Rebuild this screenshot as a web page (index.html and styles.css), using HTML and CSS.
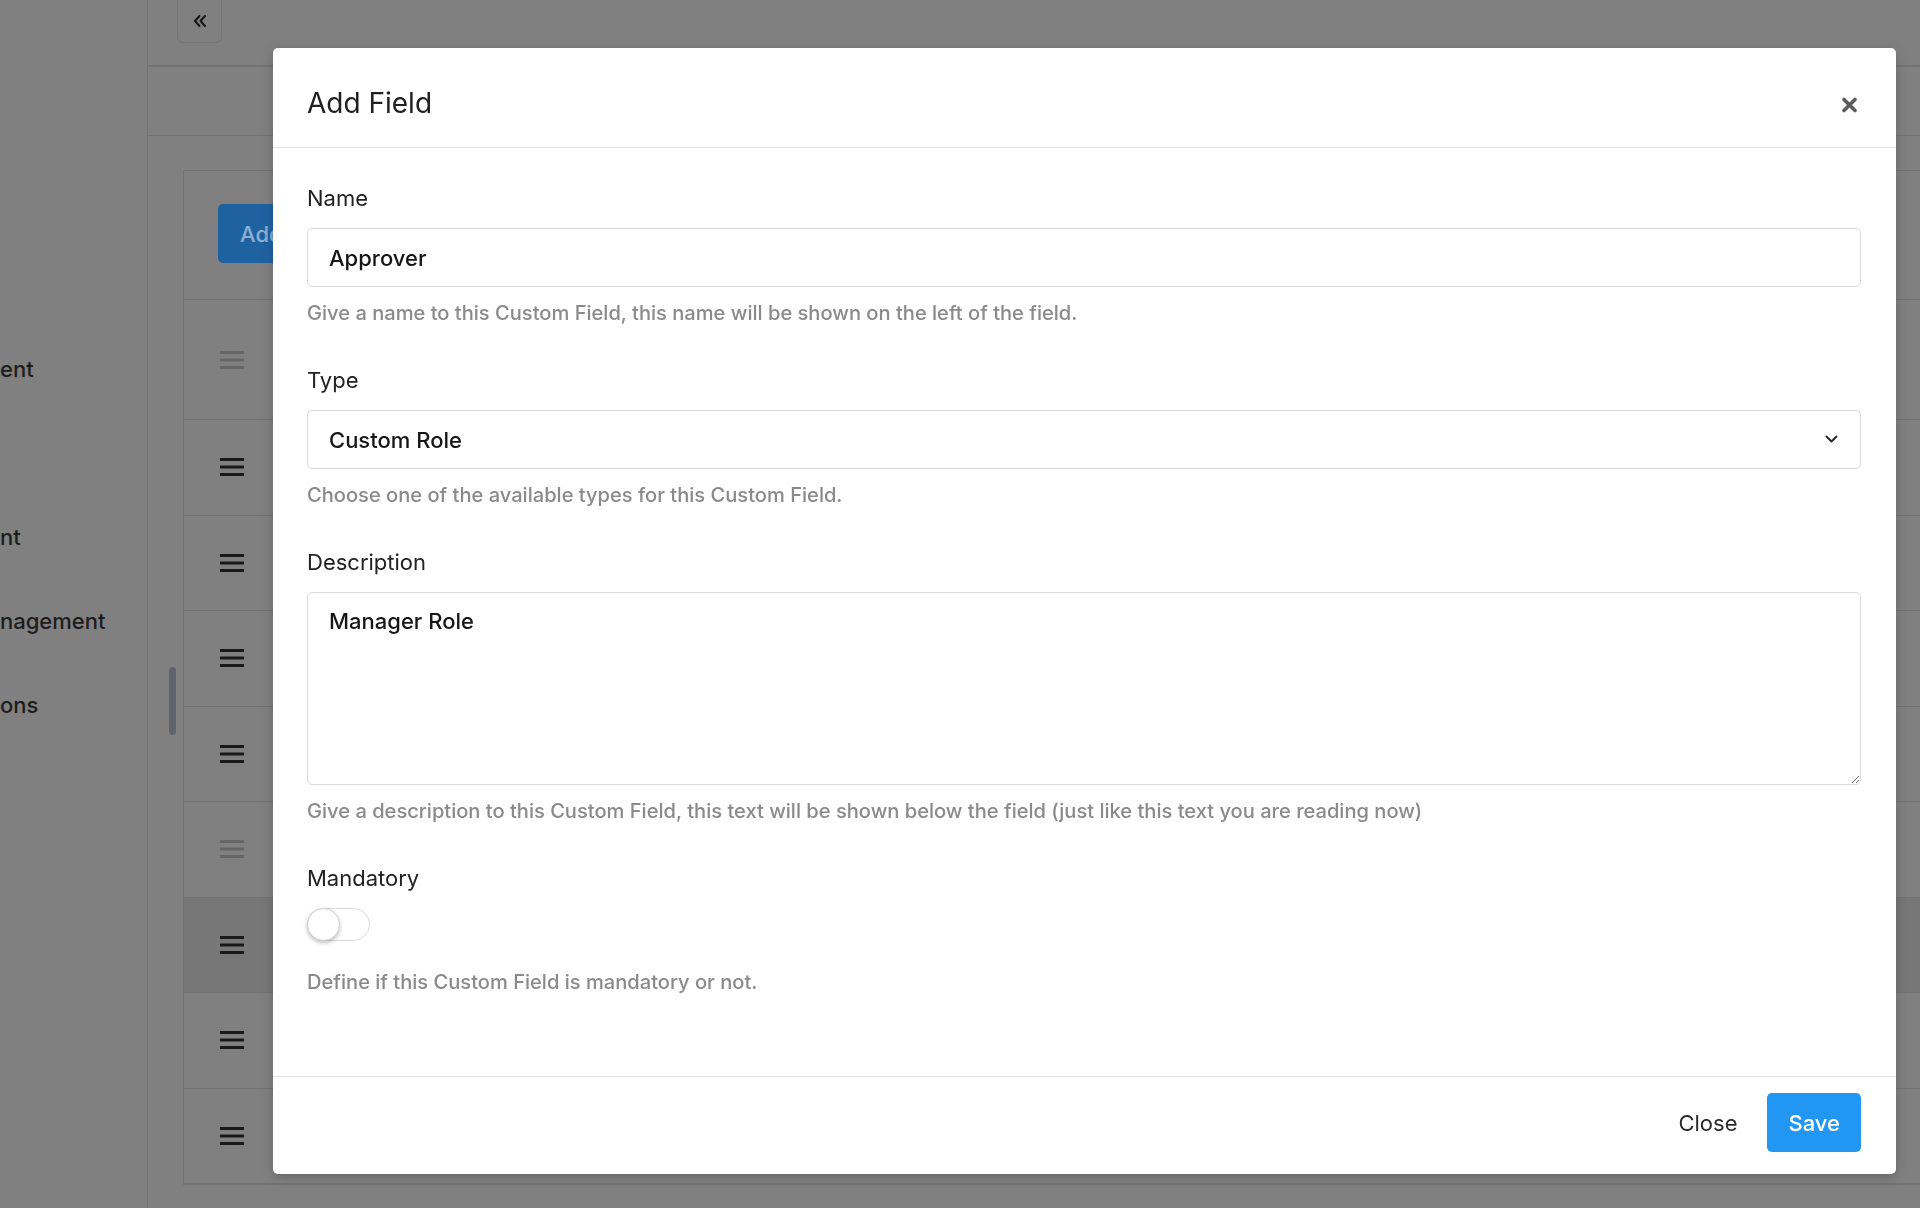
FILE: index.html
```html
<!DOCTYPE html>
<html lang="en">

<head>
    <meta charset="UTF-8">
    <meta name="viewport" content="width=device-width, initial-scale=1.0">
    <title>Custom Fields</title>
    <link rel="stylesheet" href="styles.css">
</head>

<body>
    <aside class="sidebar">
        <ul class="nav">
            <li>ent</li>
            <li></li>
            <li>nt</li>
            <li>nagement</li>
            <li>ons</li>
        </ul>
    </aside>

    <div class="main">
        <div class="scroll-thumb"></div>
        <div class="topbar">
            <button class="collapse">
                <svg width="14" height="12" viewBox="0 0 14 12" fill="none" stroke="currentColor" stroke-width="2" stroke-linecap="round" stroke-linejoin="round">
                    <path d="M6.5 1 L2 6 L6.5 11" />
                    <path d="M12 1 L7.5 6 L12 11" />
                </svg>
            </button>
        </div>
        <div class="subbar"></div>

        <div class="content">
            <div class="card">
                <div class="card-head">
                    <button class="btn-add">Add Field</button>
                </div>
                <div class="row tall faded"><svg class="handle" viewBox="0 0 24 18"><rect y="0" width="24" height="3" /><rect y="7.5" width="24" height="3" /><rect y="15" width="24" height="3" /></svg></div>
                <div class="row"><svg class="handle" viewBox="0 0 24 18"><rect y="0" width="24" height="3" /><rect y="7.5" width="24" height="3" /><rect y="15" width="24" height="3" /></svg></div>
                <div class="row"><svg class="handle" viewBox="0 0 24 18"><rect y="0" width="24" height="3" /><rect y="7.5" width="24" height="3" /><rect y="15" width="24" height="3" /></svg></div>
                <div class="row"><svg class="handle" viewBox="0 0 24 18"><rect y="0" width="24" height="3" /><rect y="7.5" width="24" height="3" /><rect y="15" width="24" height="3" /></svg></div>
                <div class="row"><svg class="handle" viewBox="0 0 24 18"><rect y="0" width="24" height="3" /><rect y="7.5" width="24" height="3" /><rect y="15" width="24" height="3" /></svg></div>
                <div class="row faded"><svg class="handle" viewBox="0 0 24 18"><rect y="0" width="24" height="3" /><rect y="7.5" width="24" height="3" /><rect y="15" width="24" height="3" /></svg></div>
                <div class="row active"><svg class="handle" viewBox="0 0 24 18"><rect y="0" width="24" height="3" /><rect y="7.5" width="24" height="3" /><rect y="15" width="24" height="3" /></svg></div>
                <div class="row"><svg class="handle" viewBox="0 0 24 18"><rect y="0" width="24" height="3" /><rect y="7.5" width="24" height="3" /><rect y="15" width="24" height="3" /></svg></div>
                <div class="row"><svg class="handle" viewBox="0 0 24 18"><rect y="0" width="24" height="3" /><rect y="7.5" width="24" height="3" /><rect y="15" width="24" height="3" /></svg></div>
            </div>
        </div>
    </div>

    <div class="modal">
        <div class="modal-header">
            <h2 class="modal-title">Add Field</h2>
            <button class="modal-close">
                <svg width="17" height="16" viewBox="0 0 17 16" fill="none" stroke="currentColor" stroke-width="3.6" stroke-linecap="round">
                    <path d="M3 2.5 L14 13.5" />
                    <path d="M14 2.5 L3 13.5" />
                </svg>
            </button>
        </div>

        <div class="modal-body">
            <div class="form-group">
                <label class="form-label">Name</label>
                <input class="form-control" type="text" value="Approver">
                <p class="help">Give a name to this Custom Field, this name will be shown on the left of the field.</p>
            </div>

            <div class="form-group">
                <label class="form-label">Type</label>
                <div class="select-wrap">
                    <select class="form-control">
                        <option>Custom Role</option>
                        <option>Text</option>
                        <option>Number</option>
                        <option>Date</option>
                    </select>
                    <svg class="chevron" width="13" height="8" viewBox="0 0 13 8" fill="none" stroke="currentColor" stroke-width="2" stroke-linecap="round" stroke-linejoin="round">
                        <path d="M1.5 1.5 L6.5 6.5 L11.5 1.5" />
                    </svg>
                </div>
                <p class="help">Choose one of the available types for this Custom Field.</p>
            </div>

            <div class="form-group">
                <label class="form-label">Description</label>
                <textarea class="form-control">Manager Role</textarea>
                <p class="help">Give a description to this Custom Field, this text will be shown below the field (just like this text you are reading now)</p>
            </div>

            <div class="form-group">
                <label class="form-label">Mandatory</label>
                <label class="switch">
                    <input type="checkbox">
                    <span class="knob"></span>
                </label>
                <p class="help">Define if this Custom Field is mandatory or not.</p>
            </div>
        </div>

        <div class="modal-footer">
            <button class="btn-link">Close</button>
            <button class="btn-primary">Save</button>
        </div>
    </div>
</body>

</html>
```

FILE: styles.css
```css
* {
    margin: 0;
    padding: 0;
    box-sizing: border-box;
}

body {
    height: 1208px;
    overflow: hidden;
    display: flex;
    background-color: #808080;
    font-family: Inter, "Noto Sans", sans-serif;
    color: #1c1c1c;
}

button,
input,
select,
textarea {
    font-family: Inter, "Noto Sans", sans-serif;
}

/* page behind the dialog (already dimmed) */

.sidebar {
    width: 148px;
    flex-shrink: 0;
    border-right: 1px solid #747474;
}

.nav {
    list-style: none;
    padding-top: 327px;
}

.nav li {
    height: 84px;
    line-height: 84px;
    font-size: 22px;
    font-weight: 500;
    color: #1d1d1d;
    white-space: nowrap;
}

.main {
    flex: 1;
    min-width: 0;
    position: relative;
    display: flex;
    flex-direction: column;
}

.scroll-thumb {
    position: absolute;
    left: 21px;
    top: 667px;
    width: 7px;
    height: 68px;
    border-radius: 4px;
    background-color: #5f636c;
}

.topbar {
    height: 67px;
    border-bottom: 2px solid #727272;
    padding-left: 29px;
}

.collapse {
    width: 45px;
    height: 43px;
    display: flex;
    align-items: center;
    justify-content: center;
    border: 1px solid #767676;
    border-top: none;
    border-radius: 0 0 6px 6px;
    background-color: #808080;
    color: #151515;
}

.subbar {
    height: 69px;
    border-bottom: 1px solid #727272;
}

.content {
    padding: 34px 0 0 35px;
}

.card {
    border: 1px solid #737373;
    border-right: none;
}

.card-head {
    height: 129px;
    padding: 33px 0 0 34px;
    border-bottom: 1px solid #727272;
}

.btn-add {
    height: 59px;
    width: 150px;
    padding-left: 22px;
    text-align: left;
    border: none;
    border-radius: 5px;
    background-color: #1f62a2;
    color: #8cafd2;
    font-size: 22px;
    font-weight: 500;
}

.row {
    height: 95.5px;
    display: flex;
    align-items: center;
    padding-left: 36px;
    border-bottom: 1px solid #727272;
    color: #1a1a1a;
}

.row.tall {
    height: 120px;
}

.row.faded {
    color: #666;
}

.row.active {
    background-color: #777;
}

.handle {
    width: 24px;
    height: 18px;
    fill: currentColor;
}

/* dialog */

.modal {
    position: fixed;
    left: 273px;
    top: 48px;
    width: 1623px;
    background-color: #fff;
    border-radius: 5px;
    box-shadow: 0 3px 12px rgba(0, 0, 0, 0.2);
}

.modal-header {
    display: flex;
    justify-content: space-between;
    align-items: center;
    padding: 36px 34px 25px;
    border-bottom: 1px solid #e4e4e4;
}

.modal-title {
    font-size: 28px;
    font-weight: 400;
    line-height: 38px;
    color: #212121;
}

.modal-close {
    border: none;
    background: none;
    color: #5c5c5c;
    margin: 4px 4px 0 0;
    display: flex;
}

.modal-body {
    padding: 34px 35px 80px 34px;
}

.form-group {
    margin-bottom: 37px;
}

.form-group:last-child {
    margin-bottom: 0;
}

.form-label {
    display: block;
    font-size: 22px;
    line-height: 33px;
    margin-bottom: 13px;
    color: #222;
}

.form-control {
    display: block;
    width: 100%;
    height: 59px;
    padding: 0 21px;
    border: 1px solid #dadada;
    border-radius: 5px;
    background-color: #fff;
    font-size: 22px;
    font-weight: 500;
    color: #161616;
    outline: none;
}

select.form-control {
    appearance: none;
    -webkit-appearance: none;
}

.select-wrap {
    position: relative;
}

.chevron {
    position: absolute;
    right: 23px;
    top: 25px;
    color: #2a2a2a;
}

textarea.form-control {
    height: 193px;
    padding: 14px 21px;
    line-height: 28px;
}

.help {
    margin-top: 12px;
    font-size: 20.1px;
    font-weight: 500;
    line-height: 28px;
    color: #8a8a8a;
}

.switch {
    display: block;
    position: relative;
    width: 63px;
    height: 33px;
    margin-bottom: 27px;
}

.switch input {
    appearance: none;
    -webkit-appearance: none;
    display: block;
    width: 100%;
    height: 100%;
    border: 1px solid #dcdcdc;
    border-radius: 17px;
    background-color: #fff;
}

.knob {
    position: absolute;
    left: 0;
    top: 0;
    width: 33px;
    height: 33px;
    border-radius: 50%;
    background-color: #fff;
    border: 1px solid #d2d2d2;
    box-shadow: 0 2px 4px rgba(0, 0, 0, 0.25);
}

.modal-footer {
    display: flex;
    justify-content: flex-end;
    align-items: center;
    padding: 16px 35px 22px;
    border-top: 1px solid #e4e4e4;
}

.btn-link {
    height: 59px;
    padding: 0 15px;
    margin-right: 15px;
    border: none;
    background: none;
    font-size: 22px;
    color: #2b2b2b;
}

.btn-primary {
    height: 59px;
    padding: 0 21px;
    border: none;
    border-radius: 5px;
    background-color: #2196f3;
    color: #fff;
    font-size: 22px;
    font-weight: 500;
}
```
